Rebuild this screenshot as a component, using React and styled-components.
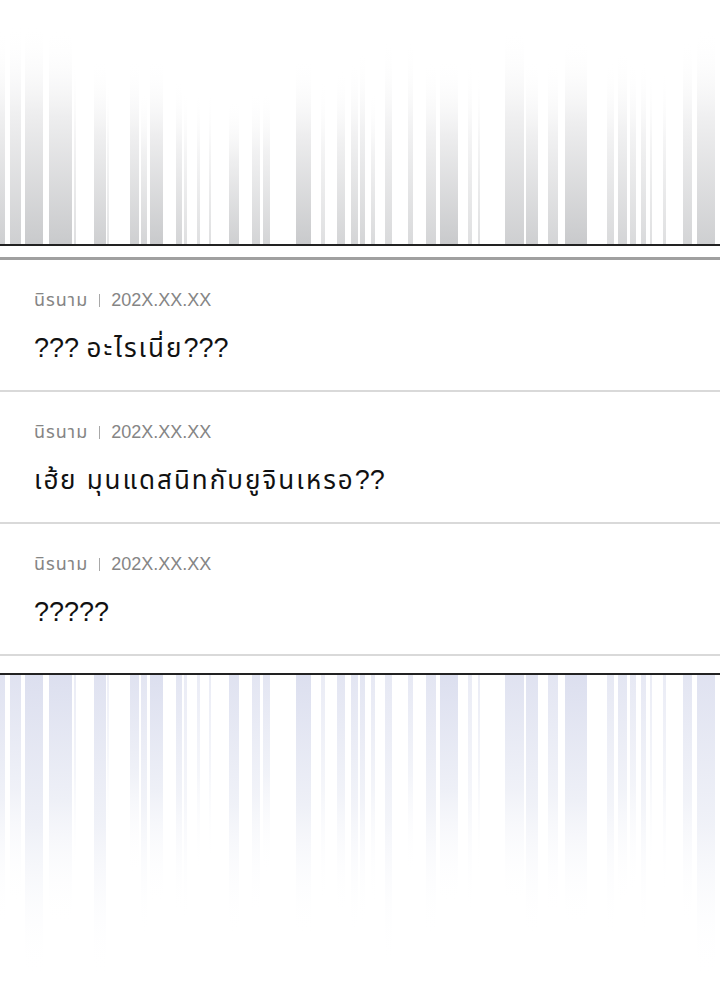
import React from "react";
import styled, { createGlobalStyle } from "styled-components";

const GlobalStyle = createGlobalStyle`
  html, body { margin: 0; padding: 0; background: #ffffff; }
  body { font-family: "Liberation Sans", "Noto Sans Thai", "Noto Sans", sans-serif; }
  * { box-sizing: border-box; }
`;

const Page = styled.div`
  width: 720px;
  height: 997px;
  display: flex;
  flex-direction: column;
  background: #ffffff;
  overflow: hidden;
`;

const Art = styled.svg`
  display: block;
  width: 720px;
  height: ${(p) => p.$h}px;
  flex: none;
`;

const Rule = styled.div`
  flex: none;
  height: ${(p) => p.$h}px;
  background: ${(p) => p.$c};
  margin-top: ${(p) => p.$mt || 0}px;
`;

const List = styled.div`
  display: flex;
  flex-direction: column;
`;

const Row = styled.div`
  height: 132px;
  padding: 28px 0 0 34px;
  border-bottom: 2px solid #d9d9d9;
  display: flex;
  flex-direction: column;
  gap: 20px;
`;

const Meta = styled.div`
  display: flex;
  align-items: center;
  gap: 11px;
  font-size: 18px;
  line-height: 24px;
  color: #858585;
`;

const Bar = styled.span`
  width: 1px;
  height: 13px;
  background: #a8a8a8;
`;

const Body = styled.div`
  font-size: 27px;
  line-height: 32px;
  color: #111111;
  white-space: nowrap;
`;

const Thai = styled.span`
  font-size: ${(p) => p.$size}px;
  letter-spacing: ${(p) => p.$ls}px;
`;

const stripes = [
  [0, 5, 30, 0.9, 250], [10, 11, 25, 0.9, 230], [25, 18, 25, 1, 300], [49, 23, 30, 1, 250],
  [74, 2, 60, 0.6, 200], [94, 12, 60, 0.9, 300], [107, 2, 80, 0.5, 160], [130, 9, 60, 0.9, 200],
  [141, 6, 90, 0.8, 260], [150, 13, 60, 1, 230], [176, 6, 80, 0.8, 240], [184, 3, 90, 0.6, 250],
  [197, 3, 90, 0.6, 200], [209, 2, 90, 0.6, 190], [229, 10, 100, 0.9, 260], [252, 8, 90, 0.8, 240],
  [263, 7, 90, 0.8, 200], [296, 15, 60, 1, 260], [321, 4, 80, 0.6, 230], [337, 8, 70, 0.8, 240],
  [351, 7, 60, 0.8, 260], [360, 5, 50, 0.8, 250], [371, 4, 90, 0.7, 230], [385, 7, 40, 0.7, 290],
  [408, 5, 40, 0.7, 200], [426, 10, 60, 0.8, 260], [440, 18, 60, 1, 230], [468, 4, 60, 0.6, 240],
  [478, 2, 70, 0.6, 200], [505, 19, 30, 0.9, 230], [526, 12, 60, 0.9, 260], [548, 10, 60, 0.8, 240],
  [565, 22, 40, 1, 250], [607, 7, 60, 0.7, 260], [618, 9, 50, 0.8, 230], [630, 6, 60, 0.7, 220],
  [641, 5, 60, 0.7, 260], [650, 2, 70, 0.6, 200], [663, 3, 70, 0.6, 220], [683, 9, 40, 0.8, 250],
  [697, 18, 30, 0.9, 300],
];

function TopArt() {
  return (
    <Art $h={244} viewBox="0 0 720 244" preserveAspectRatio="none">
      <defs>
        <linearGradient id="topFade" x1="0" y1="0" x2="0" y2="1">
          <stop offset="0" stopColor="#ffffff" stopOpacity="0" />
          <stop offset="0.4" stopColor="#eeeeef" stopOpacity="1" />
          <stop offset="1" stopColor="#c9cacc" stopOpacity="1" />
        </linearGradient>
      </defs>
      {stripes.map(([x, w, s, o], i) => (
        <rect key={i} x={x} y={s} width={w} height={244 - s} fill="url(#topFade)" opacity={o} />
      ))}
    </Art>
  );
}

function BottomArt() {
  return (
    <Art $h={322} viewBox="0 0 720 322" preserveAspectRatio="none">
      <defs>
        <linearGradient id="botFade" x1="0" y1="0" x2="0" y2="1">
          <stop offset="0" stopColor="#dcdfef" stopOpacity="1" />
          <stop offset="0.5" stopColor="#eef0f7" stopOpacity="1" />
          <stop offset="1" stopColor="#ffffff" stopOpacity="0" />
        </linearGradient>
      </defs>
      {stripes.map(([x, w, s, o, len], i) => (
        <rect key={i} x={x} y={0} width={w} height={len} fill="url(#botFade)" opacity={o} />
      ))}
    </Art>
  );
}

const THAI_RUN = /([\u0E00-\u0E7F]+(?:\s+[\u0E00-\u0E7F]+)*)/;

function Mixed({ text, size, ls }) {
  return text.split(THAI_RUN).map((part, i) =>
    THAI_RUN.test(part) ? (
      <Thai key={i} $size={size} $ls={ls}>{part}</Thai>
    ) : (
      <React.Fragment key={i}>{part}</React.Fragment>
    )
  );
}

const comments = [
  "??? อะไรเนี่ย???",
  "เฮ้ย มุนแดสนิทกับยูจินเหรอ??",
  "?????",
];

export default function App() {
  return (
    <>
      <GlobalStyle />
      <Page>
        <TopArt />
        <Rule $h={2} $c="#222222" />
        <Rule $h={3} $c="#a0a0a0" $mt={11} />
        <List>
          {comments.map((c, i) => (
            <Row key={i}>
              <Meta>
                <span><Mixed text="นิรนาม" size={18} ls={1} /></span>
                <Bar />
                <span>202X.XX.XX</span>
              </Meta>
              <Body><Mixed text={c} size={26} ls={2} /></Body>
            </Row>
          ))}
        </List>
        <Rule $h={2} $c="#222222" $mt={17} />
        <BottomArt />
      </Page>
    </>
  );
}
